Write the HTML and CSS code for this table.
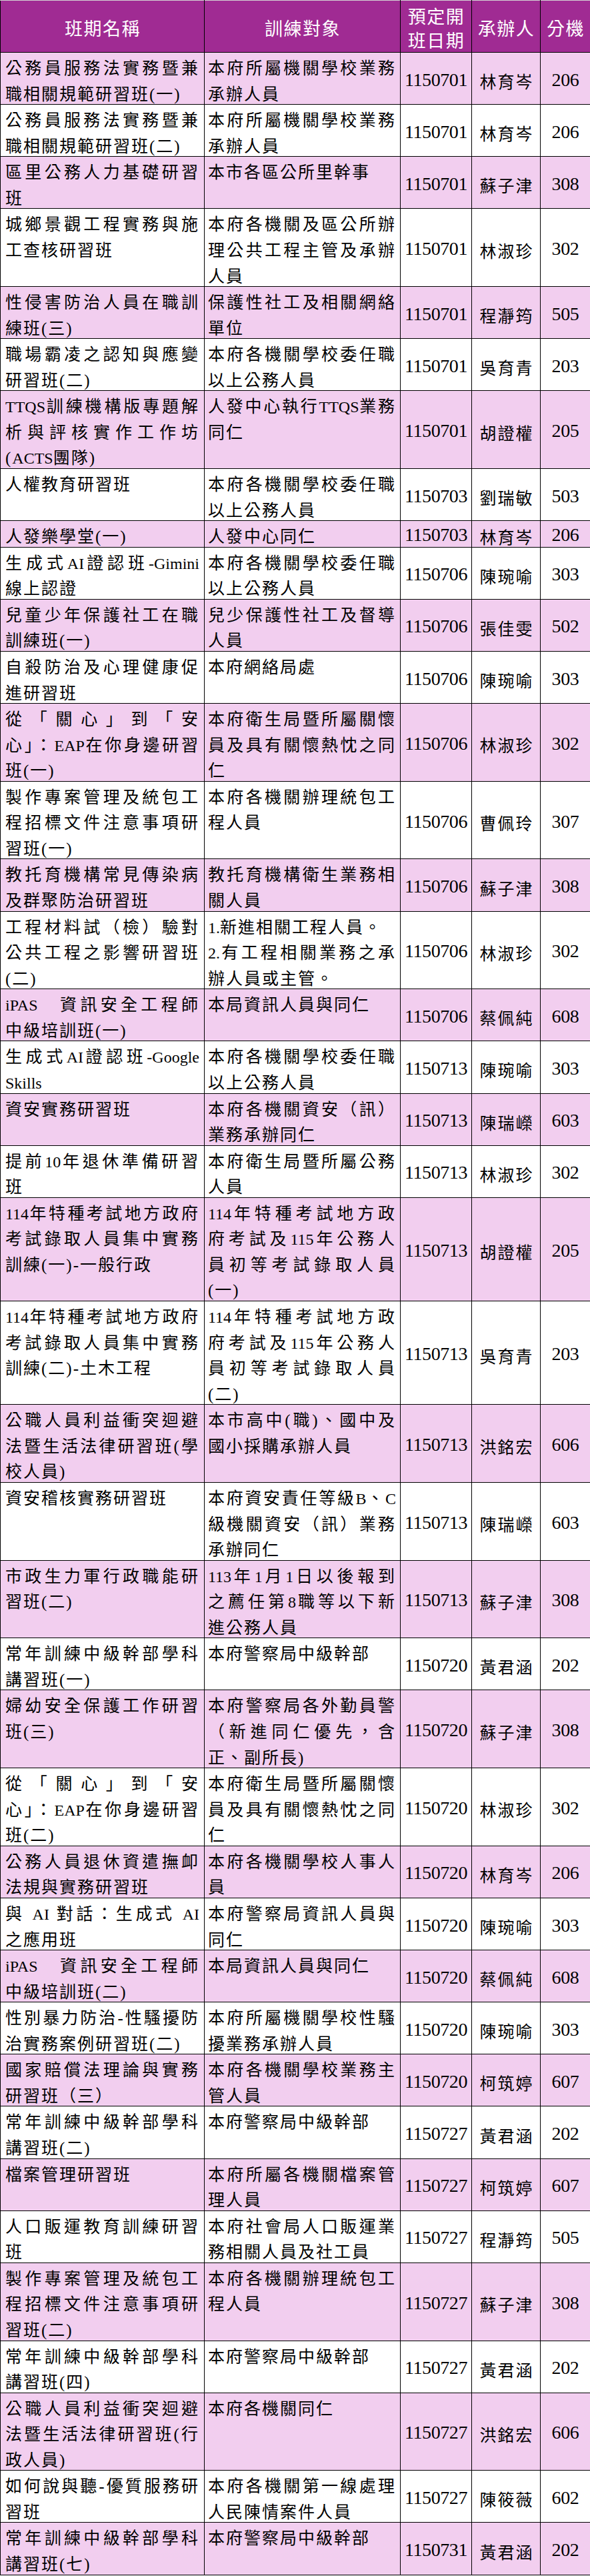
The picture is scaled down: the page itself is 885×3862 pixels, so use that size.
FILE: index.html
```html
<!DOCTYPE html>
<html lang="zh-Hant">
<head>
<meta charset="utf-8">
<title>班期一覽</title>
<link rel="stylesheet" href="styles.css">
</head>
<body>
<table class="sheet">
<colgroup><col class="w1"><col class="w2"><col class="w3"><col class="w4"><col class="w5"></colgroup>
<thead>
<tr><th>班期名稱</th><th>訓練對象</th><th>預定開<br>班日期</th><th>承辦人</th><th>分機</th></tr>
</thead>
<tbody>
<tr class="p"><td class="nm"><div class="ln">公務員服務法實務暨兼</div><div class="ln">職相關規範研習班(一)</div></td><td class="tg"><div class="ln">本府所屬機關學校業務</div><div class="ln">承辦人員</div></td><td class="dt">1150701</td><td class="pr">林育岑</td><td class="ex">206</td></tr>
<tr><td class="nm"><div class="ln">公務員服務法實務暨兼</div><div class="ln">職相關規範研習班(二)</div></td><td class="tg"><div class="ln">本府所屬機關學校業務</div><div class="ln">承辦人員</div></td><td class="dt">1150701</td><td class="pr">林育岑</td><td class="ex">206</td></tr>
<tr class="p"><td class="nm"><div class="ln">區里公務人力基礎研習</div><div class="ln">班</div></td><td class="tg"><div class="ln">本市各區公所里幹事</div></td><td class="dt">1150701</td><td class="pr">蘇子津</td><td class="ex">308</td></tr>
<tr><td class="nm"><div class="ln">城鄉景觀工程實務與施</div><div class="ln">工查核研習班</div></td><td class="tg"><div class="ln">本府各機關及區公所辦</div><div class="ln">理公共工程主管及承辦</div><div class="ln">人員</div></td><td class="dt">1150701</td><td class="pr">林淑珍</td><td class="ex">302</td></tr>
<tr class="p"><td class="nm"><div class="ln">性侵害防治人員在職訓</div><div class="ln">練班(三)</div></td><td class="tg"><div class="ln">保護性社工及相關網絡</div><div class="ln">單位</div></td><td class="dt">1150701</td><td class="pr">程瀞筠</td><td class="ex">505</td></tr>
<tr><td class="nm"><div class="ln">職場霸凌之認知與應變</div><div class="ln">研習班(二)</div></td><td class="tg"><div class="ln">本府各機關學校委任職</div><div class="ln">以上公務人員</div></td><td class="dt">1150701</td><td class="pr">吳育青</td><td class="ex">203</td></tr>
<tr class="p"><td class="nm"><div class="ln"><span class="lt">TTQS</span>訓練機構版專題解</div><div class="ln">析與評核實作工作坊</div><div class="ln">(<span class="lt">ACTS</span>團隊)</div></td><td class="tg"><div class="ln">人發中心執行<span class="lt">TTQS</span>業務</div><div class="ln">同仁</div></td><td class="dt">1150701</td><td class="pr">胡證權</td><td class="ex">205</td></tr>
<tr><td class="nm"><div class="ln">人權教育研習班</div></td><td class="tg"><div class="ln">本府各機關學校委任職</div><div class="ln">以上公務人員</div></td><td class="dt">1150703</td><td class="pr">劉瑞敏</td><td class="ex">503</td></tr>
<tr class="p"><td class="nm"><div class="ln">人發樂學堂(一)</div></td><td class="tg"><div class="ln">人發中心同仁</div></td><td class="dt">1150703</td><td class="pr">林育岑</td><td class="ex">206</td></tr>
<tr><td class="nm"><div class="ln">生成式<span class="lt">AI</span>證認班<span class="lt">-Gimini</span></div><div class="ln">線上認證</div></td><td class="tg"><div class="ln">本府各機關學校委任職</div><div class="ln">以上公務人員</div></td><td class="dt">1150706</td><td class="pr">陳琬喻</td><td class="ex">303</td></tr>
<tr class="p"><td class="nm"><div class="ln">兒童少年保護社工在職</div><div class="ln">訓練班(一)</div></td><td class="tg"><div class="ln">兒少保護性社工及督導</div><div class="ln">人員</div></td><td class="dt">1150706</td><td class="pr">張佳雯</td><td class="ex">502</td></tr>
<tr><td class="nm"><div class="ln">自殺防治及心理健康促</div><div class="ln">進研習班</div></td><td class="tg"><div class="ln">本府網絡局處</div></td><td class="dt">1150706</td><td class="pr">陳琬喻</td><td class="ex">303</td></tr>
<tr class="p"><td class="nm"><div class="ln">從「關心」到「安</div><div class="ln">心」：<span class="lt">EAP</span>在你身邊研習</div><div class="ln">班(一)</div></td><td class="tg"><div class="ln">本府衛生局暨所屬關懷</div><div class="ln">員及具有關懷熱忱之同</div><div class="ln">仁</div></td><td class="dt">1150706</td><td class="pr">林淑珍</td><td class="ex">302</td></tr>
<tr><td class="nm"><div class="ln">製作專案管理及統包工</div><div class="ln">程招標文件注意事項研</div><div class="ln">習班(一)</div></td><td class="tg"><div class="ln">本府各機關辦理統包工</div><div class="ln">程人員</div></td><td class="dt">1150706</td><td class="pr">曹佩玲</td><td class="ex">307</td></tr>
<tr class="p"><td class="nm"><div class="ln">教托育機構常見傳染病</div><div class="ln">及群聚防治研習班</div></td><td class="tg"><div class="ln">教托育機構衛生業務相</div><div class="ln">關人員</div></td><td class="dt">1150706</td><td class="pr">蘇子津</td><td class="ex">308</td></tr>
<tr><td class="nm"><div class="ln">工程材料試（檢）驗對</div><div class="ln">公共工程之影響研習班</div><div class="ln">(二)</div></td><td class="tg"><div class="ln nj"><span class="lt">1.</span>新進相關工程人員。</div><div class="ln"><span class="lt">2.</span>有工程相關業務之承</div><div class="ln">辦人員或主管。</div></td><td class="dt">1150706</td><td class="pr">林淑珍</td><td class="ex">302</td></tr>
<tr class="p"><td class="nm"><div class="ln"><span class="lt">iPAS</span>　資訊安全工程師</div><div class="ln">中級培訓班(一)</div></td><td class="tg"><div class="ln">本局資訊人員與同仁</div></td><td class="dt">1150706</td><td class="pr">蔡佩純</td><td class="ex">608</td></tr>
<tr><td class="nm"><div class="ln">生成式<span class="lt">AI</span>證認班<span class="lt">-Google</span></div><div class="ln"><span class="lt">Skills</span></div></td><td class="tg"><div class="ln">本府各機關學校委任職</div><div class="ln">以上公務人員</div></td><td class="dt">1150713</td><td class="pr">陳琬喻</td><td class="ex">303</td></tr>
<tr class="p"><td class="nm"><div class="ln">資安實務研習班</div></td><td class="tg"><div class="ln">本府各機關資安（訊）</div><div class="ln">業務承辦同仁</div></td><td class="dt">1150713</td><td class="pr">陳瑞嶸</td><td class="ex">603</td></tr>
<tr><td class="nm"><div class="ln">提前<span class="lt">10</span>年退休準備研習</div><div class="ln">班</div></td><td class="tg"><div class="ln">本府衛生局暨所屬公務</div><div class="ln">人員</div></td><td class="dt">1150713</td><td class="pr">林淑珍</td><td class="ex">302</td></tr>
<tr class="p"><td class="nm"><div class="ln"><span class="lt">114</span>年特種考試地方政府</div><div class="ln">考試錄取人員集中實務</div><div class="ln">訓練(一)-一般行政</div></td><td class="tg"><div class="ln"><span class="lt">114</span>年特種考試地方政</div><div class="ln">府考試及<span class="lt">115</span>年公務人</div><div class="ln">員初等考試錄取人員</div><div class="ln">(一)</div></td><td class="dt">1150713</td><td class="pr">胡證權</td><td class="ex">205</td></tr>
<tr><td class="nm"><div class="ln"><span class="lt">114</span>年特種考試地方政府</div><div class="ln">考試錄取人員集中實務</div><div class="ln">訓練(二)-土木工程</div></td><td class="tg"><div class="ln"><span class="lt">114</span>年特種考試地方政</div><div class="ln">府考試及<span class="lt">115</span>年公務人</div><div class="ln">員初等考試錄取人員</div><div class="ln">(二)</div></td><td class="dt">1150713</td><td class="pr">吳育青</td><td class="ex">203</td></tr>
<tr class="p"><td class="nm"><div class="ln">公職人員利益衝突迴避</div><div class="ln">法暨生活法律研習班(學</div><div class="ln">校人員)</div></td><td class="tg"><div class="ln">本市高中(職)、國中及</div><div class="ln">國小採購承辦人員</div></td><td class="dt">1150713</td><td class="pr">洪銘宏</td><td class="ex">606</td></tr>
<tr><td class="nm"><div class="ln">資安稽核實務研習班</div></td><td class="tg"><div class="ln">本府資安責任等級<span class="lt">B</span>、<span class="lt">C</span></div><div class="ln">級機關資安（訊）業務</div><div class="ln">承辦同仁</div></td><td class="dt">1150713</td><td class="pr">陳瑞嶸</td><td class="ex">603</td></tr>
<tr class="p"><td class="nm"><div class="ln">市政生力軍行政職能研</div><div class="ln">習班(二)</div></td><td class="tg"><div class="ln"><span class="lt">113</span>年<span class="lt">1</span>月<span class="lt">1</span>日以後報到</div><div class="ln">之薦任第<span class="lt">8</span>職等以下新</div><div class="ln">進公務人員</div></td><td class="dt">1150713</td><td class="pr">蘇子津</td><td class="ex">308</td></tr>
<tr><td class="nm"><div class="ln">常年訓練中級幹部學科</div><div class="ln">講習班(一)</div></td><td class="tg"><div class="ln">本府警察局中級幹部</div></td><td class="dt">1150720</td><td class="pr">黃君涵</td><td class="ex">202</td></tr>
<tr class="p"><td class="nm"><div class="ln">婦幼安全保護工作研習</div><div class="ln">班(三)</div></td><td class="tg"><div class="ln">本府警察局各外勤員警</div><div class="ln">（新進同仁優先，含</div><div class="ln">正、副所長)</div></td><td class="dt">1150720</td><td class="pr">蘇子津</td><td class="ex">308</td></tr>
<tr><td class="nm"><div class="ln">從「關心」到「安</div><div class="ln">心」：<span class="lt">EAP</span>在你身邊研習</div><div class="ln">班(二)</div></td><td class="tg"><div class="ln">本府衛生局暨所屬關懷</div><div class="ln">員及具有關懷熱忱之同</div><div class="ln">仁</div></td><td class="dt">1150720</td><td class="pr">林淑珍</td><td class="ex">302</td></tr>
<tr class="p"><td class="nm"><div class="ln">公務人員退休資遣撫卹</div><div class="ln">法規與實務研習班</div></td><td class="tg"><div class="ln">本府各機關學校人事人</div><div class="ln">員</div></td><td class="dt">1150720</td><td class="pr">林育岑</td><td class="ex">206</td></tr>
<tr><td class="nm"><div class="ln">與 <span class="lt">AI</span> 對話：生成式 <span class="lt">AI</span></div><div class="ln">之應用班</div></td><td class="tg"><div class="ln">本府警察局資訊人員與</div><div class="ln">同仁</div></td><td class="dt">1150720</td><td class="pr">陳琬喻</td><td class="ex">303</td></tr>
<tr class="p"><td class="nm"><div class="ln"><span class="lt">iPAS</span>　資訊安全工程師</div><div class="ln">中級培訓班(二)</div></td><td class="tg"><div class="ln">本局資訊人員與同仁</div></td><td class="dt">1150720</td><td class="pr">蔡佩純</td><td class="ex">608</td></tr>
<tr><td class="nm"><div class="ln">性別暴力防治-性騷擾防</div><div class="ln">治實務案例研習班(二)</div></td><td class="tg"><div class="ln">本府所屬機關學校性騷</div><div class="ln">擾業務承辦人員</div></td><td class="dt">1150720</td><td class="pr">陳琬喻</td><td class="ex">303</td></tr>
<tr class="p"><td class="nm"><div class="ln">國家賠償法理論與實務</div><div class="ln">研習班（三）</div></td><td class="tg"><div class="ln">本府各機關學校業務主</div><div class="ln">管人員</div></td><td class="dt">1150720</td><td class="pr">柯筑婷</td><td class="ex">607</td></tr>
<tr><td class="nm"><div class="ln">常年訓練中級幹部學科</div><div class="ln">講習班(二)</div></td><td class="tg"><div class="ln">本府警察局中級幹部</div></td><td class="dt">1150727</td><td class="pr">黃君涵</td><td class="ex">202</td></tr>
<tr class="p"><td class="nm"><div class="ln">檔案管理研習班</div></td><td class="tg"><div class="ln">本府所屬各機關檔案管</div><div class="ln">理人員</div></td><td class="dt">1150727</td><td class="pr">柯筑婷</td><td class="ex">607</td></tr>
<tr><td class="nm"><div class="ln">人口販運教育訓練研習</div><div class="ln">班</div></td><td class="tg"><div class="ln">本府社會局人口販運業</div><div class="ln">務相關人員及社工員</div></td><td class="dt">1150727</td><td class="pr">程瀞筠</td><td class="ex">505</td></tr>
<tr class="p"><td class="nm"><div class="ln">製作專案管理及統包工</div><div class="ln">程招標文件注意事項研</div><div class="ln">習班(二)</div></td><td class="tg"><div class="ln">本府各機關辦理統包工</div><div class="ln">程人員</div></td><td class="dt">1150727</td><td class="pr">蘇子津</td><td class="ex">308</td></tr>
<tr><td class="nm"><div class="ln">常年訓練中級幹部學科</div><div class="ln">講習班(四)</div></td><td class="tg"><div class="ln">本府警察局中級幹部</div></td><td class="dt">1150727</td><td class="pr">黃君涵</td><td class="ex">202</td></tr>
<tr class="p"><td class="nm"><div class="ln">公職人員利益衝突迴避</div><div class="ln">法暨生活法律研習班(行</div><div class="ln">政人員)</div></td><td class="tg"><div class="ln">本府各機關同仁</div></td><td class="dt">1150727</td><td class="pr">洪銘宏</td><td class="ex">606</td></tr>
<tr><td class="nm"><div class="ln">如何說與聽-優質服務研</div><div class="ln">習班</div></td><td class="tg"><div class="ln">本府各機關第一線處理</div><div class="ln">人民陳情案件人員</div></td><td class="dt">1150727</td><td class="pr">陳筱薇</td><td class="ex">602</td></tr>
<tr class="p"><td class="nm"><div class="ln">常年訓練中級幹部學科</div><div class="ln">講習班(七)</div></td><td class="tg"><div class="ln">本府警察局中級幹部</div></td><td class="dt">1150731</td><td class="pr">黃君涵</td><td class="ex">202</td></tr>
</tbody>
</table>
</body>
</html>
```

FILE: styles.css
```css
html, body {
  margin: 0;
  padding: 0;
  background: #ffffff;
}

.sheet {
  border-collapse: collapse;
  table-layout: fixed;
  width: 885px;
  font-family: "Liberation Serif", "Noto Sans CJK TC", serif;
  color: #000000;
}

.w1 { width: 306px; }
.w2 { width: 294px; }
.w3 { width: 107px; }
.w4 { width: 103px; }
.w5 { width: 75px; }

.sheet th {
  box-sizing: border-box;
  height: 78px;
  background: #a02b93;
  color: #ffffff;
  font-family: "Noto Sans CJK TC", sans-serif;
  font-weight: 400;
  font-size: 27px;
  letter-spacing: 1.5px;
  line-height: 36px;
  padding: 5px 0 0 1px;
  text-align: center;
  vertical-align: middle;
  border: 1px solid #000000;
  border-top-color: #d4d4d4;
}

.sheet td {
  border: 1px solid #000000;
  padding: 0;
  vertical-align: top;
}

.sheet tr.p td {
  background: #f2ceef;
}

.sheet td.nm {
  padding: 0 7px 0 7px;
}

.sheet td.tg {
  padding: 0 6px 0 5px;
}

.ln {
  box-sizing: border-box;
  height: 38.57px;
  overflow: visible;
  font-size: 25px;
  letter-spacing: 2px;
  line-height: 29.57px;
  padding-top: 9px;
  text-align: left;
}

.ln:not(:last-child) {
  text-align-last: justify;
}

.ln.nj {
  text-align-last: left;
}

.lt {
  font-size: 24px;
  letter-spacing: 0;
}

.sheet td.dt,
.sheet td.ex {
  font-size: 28px;
  letter-spacing: -0.4px;
  line-height: 34px;
  padding-top: 4px;
  text-align: center;
  vertical-align: middle;
}

.sheet td.pr {
  font-family: "Noto Sans CJK TC", sans-serif;
  font-size: 25px;
  letter-spacing: 2px;
  line-height: 30px;
  padding: 7px 0 0 2px;
  text-align: center;
  vertical-align: middle;
}
```
